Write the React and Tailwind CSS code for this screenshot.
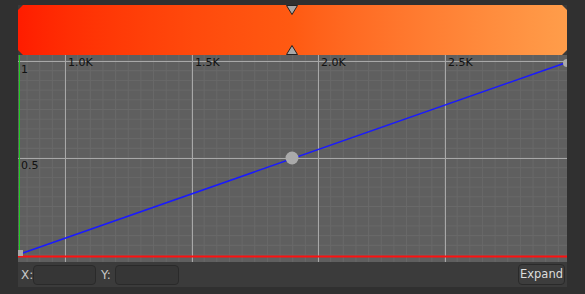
import React from 'react'

const W = 549
const H = 207
const major = [47, 174, 300, 427]
const step = 12.65

const vMinor = []
for (let x = 47 - step * 3; x < W; x += step) if (x > 2) vMinor.push(x)
const hMinor = []
for (let y = 6; y < H; y += 9.7) hMinor.push(y)

const Graph = () => (
  <svg width={W} height={H} className='block' style={{ fontFamily: '"DejaVu Sans", sans-serif' }}>
    <rect width={W} height={H} fill='#5f5f5f' />
    {vMinor.map((x, i) => (
      <line key={'v' + i} x1={x} x2={x} y1={0} y2={H} stroke='#696969' strokeWidth='1' />
    ))}
    {hMinor.map((y, i) => (
      <line key={'h' + i} x1={0} x2={W} y1={y} y2={y} stroke='#696969' strokeWidth='1' />
    ))}
    {major.map((x) => (
      <line key={x} x1={x + 0.5} x2={x + 0.5} y1={0} y2={H} stroke='#a8a8a8' strokeWidth='1' />
    ))}
    <line x1={0} x2={W} y1={6.5} y2={6.5} stroke='#a8a8a8' strokeWidth='1' />
    <line x1={0} x2={W} y1={103.5} y2={103.5} stroke='#a8a8a8' strokeWidth='1' />
    <line x1={1.5} x2={1.5} y1={0} y2={200} stroke='#22cc22' strokeWidth='1' />
    <line x1={0} x2={W} y1={201.5} y2={201.5} stroke='#ff1010' strokeWidth='2' />
    <line x1={2} y1={199} x2={547} y2={8} stroke='#1a1aff' strokeWidth='1.6' />
    <rect x={0} y={195} width={5} height={6} fill='#a8a8a8' />
    <circle cx={549} cy={8} r={4} fill='#a8a8a8' />
    <circle cx={274} cy={103} r={6.5} fill='#aaaaaa' />
    <g fontSize='11' fill='#111'>
      <text x={50} y={11}>1.0K</text>
      <text x={177} y={11}>1.5K</text>
      <text x={303} y={11}>2.0K</text>
      <text x={430} y={11}>2.5K</text>
      <text x={3} y={18}>1</text>
      <text x={3} y={114}>0.5</text>
    </g>
  </svg>
)

const App = () => {
  return (
    <div className='w-[585px] h-[294px] bg-[#303030] pt-[5px] pl-[18px]' style={{ fontFamily: '"DejaVu Sans", sans-serif' }}>
      <div className='w-[549px] flex flex-col'>
        <div className='relative h-[50px] bg-gradient-to-r from-[#ff1c00] via-[#ff5a12] to-[#ff9d4a]'>
          <svg className='absolute left-0 top-0' width='549' height='50'>
            <polygon points='0,0 5,0 0,5' fill='#3a3a3a' />
            <polygon points='0,50 5,50 0,45' fill='#3a3a3a' />
            <polygon points='549,0 544,0 549,5' fill='#3a3a3a' />
            <polygon points='549,50 544,50 549,45' fill='#3a3a3a' />
            <polygon points='268.5,0.5 279.5,0.5 274,9.5' fill='#a8a8a8' stroke='#222' strokeWidth='1' />
            <polygon points='268.5,49.5 279.5,49.5 274,40.5' fill='#a8a8a8' stroke='#222' strokeWidth='1' />
          </svg>
        </div>
        <Graph />
        <div className='h-[25px] bg-[#3b3b3b] flex items-center text-[12px] text-[#c8c8c8]'>
          <span className='ml-[3px] w-[12px]'>X:</span>
          <div className='w-[63px] h-[20px] rounded-[4px] bg-[#363636] border border-[#2a2a2a]' />
          <span className='ml-[5px] w-[14px]'>Y:</span>
          <div className='w-[64px] h-[20px] rounded-[4px] bg-[#363636] border border-[#2a2a2a]' />
          <button className='ml-auto mr-[2px] h-[21px] w-[47px] rounded-[4px] bg-[#3d3d3d] border border-[#2a2a2a] text-[11.5px] text-[#dcdcdc] leading-none'>
            Expand
          </button>
        </div>
      </div>
    </div>
  )
}

export default App
